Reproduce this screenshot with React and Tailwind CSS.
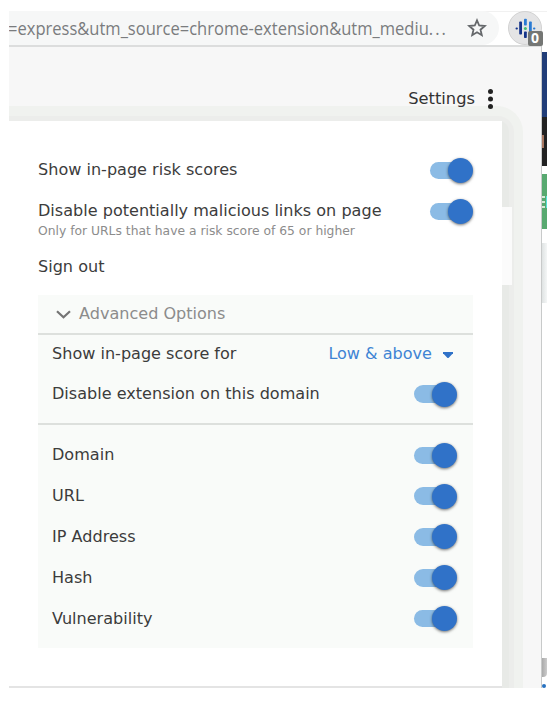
import React from "react";

const ui = "font-['DejaVu_Sans',sans-serif] whitespace-nowrap";

function Toggle() {
  return (
    <div className="flex h-[25px] w-[44px] shrink-0 items-center rounded-full">
      <div className="flex h-[17.5px] w-[40px] items-center rounded-full bg-[#8bbbe5] pl-[18.4px]">
        <div className="h-[25px] w-[25px] shrink-0 rounded-full bg-[#3072c8] shadow-[0_1px_3px_rgba(0,0,0,0.55)]" />
      </div>
    </div>
  );
}

function Row({ label, className }) {
  return (
    <div className={"flex items-center justify-between " + className}>
      <span className={ui + " text-[16.07px] text-[#3c3c3c]"}>{label}</span>
      <Toggle />
    </div>
  );
}

function ExtensionIcon() {
  return (
    <div className="relative ml-[9px] h-[34px] w-[34px] shrink-0 rounded-full border border-[#d2d2d2] bg-[#e4e4e5]">
      <svg className="absolute left-[6px] top-[6px]" width="22" height="22" viewBox="0 0 22 22">
        <g fill="#15348b">
          <rect x="0.5" y="9.5" width="2.4" height="2" rx="1" />
          <rect x="4.2" y="3.5" width="2.8" height="13" rx="0.8" />
          <rect x="9" y="13.5" width="2.8" height="6.5" rx="0.8" />
        </g>
        <g fill="#2b7bd3">
          <rect x="9" y="0.8" width="2.8" height="6.8" rx="0.8" />
          <rect x="14" y="3.5" width="2.8" height="13" rx="0.8" />
          <rect x="18" y="9.5" width="2.4" height="2" rx="1" />
        </g>
        <circle cx="10.4" cy="10.5" r="1.5" fill="#43bd74" />
      </svg>
      <div className="absolute left-[18.5px] top-[18.5px] flex h-[15px] w-[15px] items-center justify-center rounded-[2px] bg-[#747674] font-['Open_Sans',sans-serif] text-[14px] font-bold leading-none text-white">
        0
      </div>
    </div>
  );
}

const kinds = ["Domain", "URL", "IP Address", "Hash", "Vulnerability"];

export default function App() {
  return (
    <div className="h-[704px] w-[558px] overflow-hidden bg-white pl-[9px] pt-[11px]">
      <div className="flex h-[34px] w-[538px] border-t border-[#f1f1f1]">
        <div className="-mt-px flex h-[34px] w-[490px] items-center overflow-hidden rounded-r-full bg-[#f6f7f7]">
          <div className="-ml-[1px] w-[441px] shrink-0">
            <span className="inline-block origin-left scale-x-[0.918] whitespace-nowrap font-['Open_Sans','Noto_Sans',sans-serif] text-[18px] text-[#7a7c7e]">
              =express&amp;utm_source=chrome-extension&amp;utm_mediu<span className="tracking-[2.2px]">...</span>
            </span>
          </div>
          <svg className="ml-[17.5px] shrink-0" width="20" height="20" viewBox="0 0 20 20" fill="none" stroke="#65686b" strokeWidth="1.8">
            <path d="M10 2.3 L12.2 7.5 L17.8 8 L13.5 11.7 L14.8 17.2 L10 14.3 L5.2 17.2 L6.5 11.7 L2.2 8 L7.8 7.5 Z" />
          </svg>
        </div>
        <div className="-mt-px">
          <ExtensionIcon />
        </div>
      </div>

      <div className="flex h-[643px] w-[538px]">
        <div className="flex w-[532px] flex-col border-t-2 border-[#dcdddd] bg-[#f7f7f7]">
          <div className="relative z-10 flex h-[59px] items-end justify-end pr-[47px]">
            <div className="-mb-[6px] flex h-[26px] items-center gap-[12px]">
              <span className={ui + " text-[16.3px] text-[#333]"}>Settings</span>
              <svg width="7" height="20" viewBox="0 0 7 20" fill="#222">
                <circle cx="3.5" cy="2.6" r="2.5" />
                <circle cx="3.5" cy="10" r="2.5" />
                <circle cx="3.5" cy="17.4" r="2.5" />
              </svg>
            </div>
          </div>
          <div className="relative flex min-h-0 w-[514px] flex-1 rounded-tr-[26px] bg-[#f0f2ef] pr-[9px] pt-[10px]">
            <div className="flex flex-1 rounded-tr-[16px] bg-[#ecedeb] pr-[5px] pt-[5px]">
              <div className="flex flex-1 rounded-tr-[10px] bg-[#e8eae7] pr-[7px]">
                <div className="w-[493px] border-b-2 border-[#e4e4e4] bg-white pl-[29px] pt-[29px]">
                  <Row label="Show in-page risk scores" className="h-[41px] w-[436px]" />
                  <Row label="Disable potentially malicious links on page" className="h-[41px] w-[436px]" />
                  <p className={ui + " -mt-[9px] text-[12.33px] leading-[16px] text-[#8c8c8c]"}>
                    Only for URLs that have a risk score of 65 or higher
                  </p>
                  <p className={ui + " mt-[17px] text-[16.07px] leading-[22px] text-[#3c3c3c]"}>Sign out</p>
                  <div className="mt-[17px] h-[353px] w-[435px] bg-[#f9fbf9]">
                    <div className="flex h-[40px] items-center border-b-2 border-[#dde0dd] pl-[18px] pt-px">
                      <svg width="15" height="9" viewBox="0 0 15 9" fill="none" stroke="#747474" strokeWidth="2.2">
                        <path d="M1 1.2 L7.5 7.2 L14 1.2" />
                      </svg>
                      <span className={ui + " ml-[8px] text-[16.07px] text-[#8c8c8c]"}>Advanced Options</span>
                    </div>
                    <div className="flex h-[39px] items-center justify-between pl-[14px] pr-[20px]">
                      <span className={ui + " text-[16.07px] text-[#3c3c3c]"}>Show in-page score for</span>
                      <div className="flex items-center gap-[11px]">
                        <span className={ui + " text-[16.07px] text-[#4084d4]"}>Low &amp; above</span>
                        <svg width="10" height="6" viewBox="0 0 10 6" fill="#3072c8">
                          <path d="M0 0 H10 V1.2 L5.5 6 H4.5 L0 1.2 Z" />
                        </svg>
                      </div>
                    </div>
                    <Row label="Disable extension on this domain" className="h-[40px] pl-[14px] pr-[15px]" />
                    <div className="mt-[9px] border-t-2 border-[#dde0dd] pt-[10px]">
                      {kinds.map((k) => (
                        <Row key={k} label={k} className="h-[40.8px] pl-[14px] pr-[15px]" />
                      ))}
                    </div>
                  </div>
                </div>
              </div>
            </div>
            <div className="absolute left-[493px] top-[101px] h-[78px] w-[10px] bg-[#fbfbfb]" />
          </div>
        </div>
        <div className="flex w-[6px] flex-col border-l border-[#c8caca] pt-[7px]">
          <div className="h-[65px] shrink-0 bg-[#213d78]" />
          <div className="flex h-[49px] shrink-0 flex-col justify-center bg-[#222]">
            <div className="h-[13px] w-[2px] bg-[#a87862]" />
          </div>
          <div className="mt-[8px] flex h-[55px] shrink-0 items-center justify-between bg-[#58a970]">
            <div className="flex w-[3px] flex-col gap-[3px]">
              <div className="h-[2px] bg-[#d8ead8]" />
              <div className="h-[2px] bg-[#d8ead8]" />
              <div className="h-[2px] bg-[#d8ead8]" />
            </div>
            <div className="h-[12px] w-px bg-[#55dfd8]" />
          </div>
          <div className="mt-[14px] h-[60px] shrink-0 bg-linear-to-r from-[#dfe3e3] to-[#f4f6f6]" />
          <div className="mt-[355px] h-[19px] shrink-0 rounded-br bg-linear-to-r from-[#aaaaaa] to-[#cccccc]" />
          <div className="mt-[7px] h-[4px] w-[4px] shrink-0 rounded-full bg-[#2872c0]" />
        </div>
      </div>
    </div>
  );
}
